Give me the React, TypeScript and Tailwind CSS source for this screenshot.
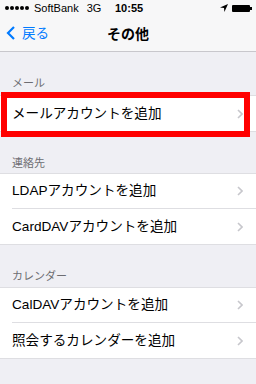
import React from "react";

const font = {
  fontFamily:
    '"Helvetica Neue", "Liberation Sans", "Noto Sans CJK JP", sans-serif',
};

function Chevron() {
  return (
    <svg width="6" height="10" viewBox="0 0 6 10" className="shrink-0">
      <path d="M1 1 L5 5 L1 9" fill="none" stroke="#c7c7cc" strokeWidth="1.6" />
    </svg>
  );
}

function Row({ label, last }: { label: string; last?: boolean }) {
  return (
    <div className="h-[35px] pl-3 bg-white">
      <div
        className={
          "h-full flex items-center justify-between pr-[13px] " +
          (last ? "" : "border-b border-[#dedee2]")
        }
      >
        <span className="text-[13.6px] leading-none text-black">{label}</span>
        <Chevron />
      </div>
    </div>
  );
}

function Header({ label, h, pb }: { label: string; h: string; pb: string }) {
  return (
    <div className={"flex items-end pl-3 " + h + " " + pb}>
      <span className="text-[11px] leading-[14px] text-[#6d6d72]">{label}</span>
    </div>
  );
}

export default function App() {
  return (
    <div
      className="relative w-[256px] h-[384px] bg-[#efeff4] overflow-hidden"
      style={font}
    >
      {/* status + nav */}
      <div className="bg-[#f7f7f8] border-b border-[#c8c7cc]">
        <div className="h-[16px] relative flex items-center text-[11px] text-black">
          <div className="flex items-center gap-[1px] ml-[5px]">
            {[0, 1, 2, 3, 4].map((i) => (
              <div key={i} className="w-[4px] h-[4px] rounded-full bg-black" />
            ))}
          </div>
          <span className="ml-[5px] leading-none">SoftBank</span>
          <span className="ml-[8px] leading-none">3G</span>
          <span className="absolute left-[115px] font-bold leading-none">10:55</span>
          <svg
            width="8"
            height="8"
            viewBox="0 0 8 8"
            className="absolute left-[220px] top-[4px]"
          >
            <path d="M8 0 L0 3.6 L4 4 L4.4 8 Z" fill="#000" />
          </svg>
          <div className="absolute left-[232px] top-[5px] flex items-center">
            <div className="w-[18px] h-[7px] bg-black rounded-[1px]" />
            <div className="w-[2px] h-[3px] bg-black" />
          </div>
        </div>
        <div className="h-[35px] relative flex items-center">
          <svg
            width="10"
            height="14"
            viewBox="0 0 10 14"
            className="absolute left-[6px] top-[10px]"
          >
            <path
              d="M8 1 L2 7 L8 13"
              fill="none"
              stroke="#007aff"
              strokeWidth="2.2"
            />
          </svg>
          <span className="absolute left-[22px] text-[13.6px] leading-none text-[#007aff]">
            戻る
          </span>
          <span className="w-full text-center text-[14px] font-bold leading-none text-black">
            その他
          </span>
        </div>
      </div>

      <Header label="メール" h="h-[43px]" pb="pb-[5px]" />
      <div className="border-y border-[#dedee2]">
        <Row label="メールアカウントを追加" last />
      </div>

      <Header label="連絡先" h="h-[41px]" pb="pb-[3px]" />
      <div className="border-y border-[#dedee2]">
        <Row label="LDAPアカウントを追加" />
        <Row label="CardDAVアカウントを追加" last />
      </div>

      <Header label="カレンダー" h="h-[42px]" pb="pb-[4px]" />
      <div className="border-y border-[#dedee2]">
        <Row label="CalDAVアカウントを追加" />
        <Row label="照会するカレンダーを追加" last />
      </div>

      {/* red highlight */}
      <div className="absolute left-[1px] top-[92px] w-[249px] h-[45px] border-[6px] border-[#ff0000]" />
    </div>
  );
}
